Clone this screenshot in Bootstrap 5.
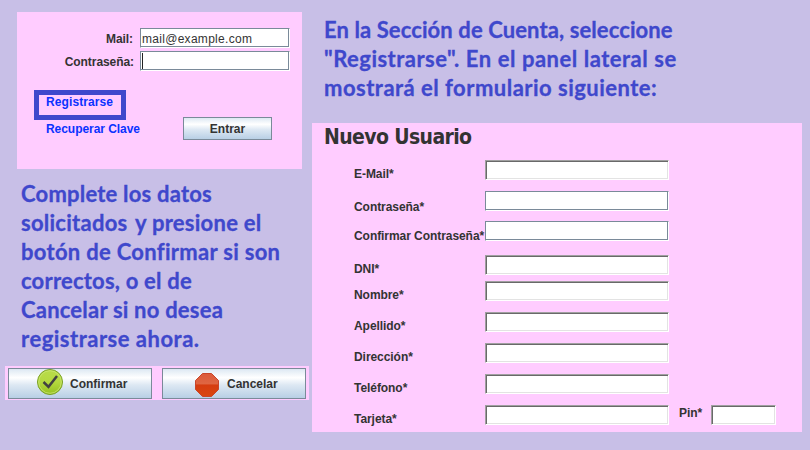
<!DOCTYPE html>
<html lang="es">
<head>
<meta charset="utf-8">
<meta name="viewport" content="width=device-width, initial-scale=1">
<title>Nuevo Usuario</title>
<link href="https://cdn.jsdelivr.net/npm/bootstrap@5.3.0/dist/css/bootstrap.min.css" rel="stylesheet">
<style>
body{width:810px;height:450px;overflow:hidden;background:#c8bfe7;font:bold 12px/14px "Liberation Sans",Arial,sans-serif;color:#333}
.left-side{width:312px;flex:none}
.pink{background:#ffccff}
.login{width:285px;height:157px;margin:12px 0 0 17px;padding-top:16px}
.login-row{height:20px;margin-bottom:3px}
.login-row label{width:116px;margin-right:1px;padding-top:4px;text-align:right;letter-spacing:-.07px}
.login-row label.pw{width:117px;margin-right:0}
.field{display:block;width:184px;height:20px;padding:0 2px;border:0;border-radius:0;outline:0;background:#fff;color:#333;flex:none}
.sunken{border:1px solid #fff;border-top-color:#a0a0a0;border-left-color:#a0a0a0;box-shadow:inset 1px 1px #696969,inset -1px -1px #e3e3e3}
.metal{border:1px solid #fff;border-top-color:#7a8a99;border-left-color:#7a8a99;box-shadow:inset -1px -1px #7a8a99}
.login .field{width:150px;margin-left:6px;padding:1px 1px 0;font:12px/17px "Liberation Sans",Arial,sans-serif;letter-spacing:.29px}
.caret{width:1px;height:16px;margin:0;background:#222}
.links{width:106px;margin:16px 0 0 17px}
.links a{display:block;color:#0a32ff;text-decoration:none;white-space:nowrap}
.links .marked{width:92px;height:30px;border:5px solid #3f48cc;padding:0 0 0 7px;letter-spacing:.1px}
.links .recover{padding:2px 0 0 12px;letter-spacing:-.05px}
.btn.steel{height:23px;padding:0;border:1px solid #7a8a99;border-radius:0;color:#333;font:bold 12px/21px "Liberation Sans",Arial,sans-serif;background:linear-gradient(#dde8f3 0,#fff 30%,#dde8f3 55%,#b8cfe5 100%)}
.btn.enter{width:89px;margin:43px 0 0 43px;padding-top:1px}
.note{color:#3f48cc;font:bold 22px/29px Lato,sans-serif;white-space:nowrap;font-variant-ligatures:none;-webkit-text-stroke:.3px #3f48cc}
.note div{height:29px}
.l1,.l4,.l5{letter-spacing:.21px}
.l2{letter-spacing:.25px}
.l2 span{margin-left:2px}
.l3{letter-spacing:.3px}
.l6{letter-spacing:.5px}
.r1{letter-spacing:.1px}
.r2{letter-spacing:.48px;word-spacing:.3px}
.r3{letter-spacing:.48px}
.note-left{margin:10px 0 0 21px;height:174px}
.note-right{margin:15px 0 0 12px;height:87px}
.actions{width:304px;height:34px;margin:13px 0 0 5px;padding:2px 3px 1px;gap:10px}
.btn.wide{width:144px;height:31px;padding-top:1px}
.wide svg{display:block;margin-top:-1px}
.form-box{width:490px;height:309px;margin-top:21px;padding-left:12px}
.form-box h1{margin:0;height:37px;font:bold 21px/28px "DejaVu Sans Condensed","DejaVu Sans",sans-serif;font-stretch:condensed;letter-spacing:-.62px}
.form-row{height:20px;margin-bottom:11px;letter-spacing:-.06px}
.form-row label{width:131px;margin-left:30px;padding-top:7px;white-space:nowrap}
.form-row label.pin{width:32px;margin-left:10px;padding-top:1px}
.form-row .pin-field{width:65px}
.lower label{padding-top:9px}
.lower.confirm label{padding-top:8px}
</style>
<script src="https://cdn.jsdelivr.net/npm/bootstrap@5.3.0/dist/js/bootstrap.bundle.min.js"></script>
</head>
<body class="d-flex align-items-start">
<div class="left-side">
  <section class="login pink">
    <div class="login-row d-flex"><label for="mail">Mail:</label><input id="mail" class="field metal" value="mail@example.com"></div>
    <div class="login-row d-flex"><label class="pw">Contraseña:</label><div class="field metal"><div class="caret"></div></div></div>
    <div class="d-flex align-items-start">
      <nav class="links"><a class="marked" href="#">Registrarse</a><a class="recover" href="#">Recuperar Clave</a></nav>
      <button class="btn steel enter">Entrar</button>
    </div>
  </section>
  <div class="note note-left">
    <div class="l1">Complete los datos</div>
    <div class="l2">solicitados <span>y presione el</span></div>
    <div class="l3">botón de Confirmar si son</div>
    <div class="l4">correctos, o el de</div>
    <div class="l5">Cancelar si no desea</div>
    <div class="l6">registrarse ahora.</div>
  </div>
  <div class="actions pink d-flex">
    <button class="btn steel wide d-flex align-items-center"><svg width="61" height="29" viewBox="0 0 61 29">
      <defs><linearGradient id="green" x2="0" y2="1"><stop stop-color="#b9dc4b"/><stop offset=".5" stop-color="#b4d93f"/><stop offset="1" stop-color="#94c01f"/></linearGradient></defs>
      <circle cx="41" cy="13" r="12.5" fill="url(#green)" stroke="#78a022"/><circle cx="41" cy="13" r="11.3" fill="none" stroke="#cbe673" stroke-width=".8"/>
      <path d="M34.500 13l5 4.800L48 7" fill="none" stroke="#414141" stroke-width="2.5"/></svg>Confirmar</button>
    <button class="btn steel wide d-flex align-items-center"><svg width="64" height="29" viewBox="0 0 64 29">
      <defs><linearGradient id="red" x2="0" y2="1"><stop stop-color="#dc5a3b"/><stop offset=".45" stop-color="#df6642"/><stop offset=".5" stop-color="#d63c10"/><stop offset="1" stop-color="#d9460f"/></linearGradient></defs>
      <path d="M39.500 4.500h9l7 7v9l-7 7h-9l-7-7v-9z" fill="url(#red)" stroke="#c9452a"/></svg>Cancelar</button>
  </div>
</div>
<main>
  <div class="note note-right">
    <div class="r1">En la Sección de Cuenta, seleccione</div>
    <div class="r2">"Registrarse". En el panel lateral se</div>
    <div class="r3">mostrará el formulario siguiente:</div>
  </div>
  <section class="form-box pink">
    <h1>Nuevo Usuario</h1>
    <div class="form-row d-flex"><label>E-Mail*</label><input class="field sunken"></div>
    <div class="form-row lower d-flex" style="margin-bottom:10px"><label>Contraseña*</label><input class="field metal"></div>
    <div class="form-row lower confirm d-flex" style="margin-bottom:14px"><label>Confirmar Contraseña*</label><input class="field metal"></div>
    <div class="form-row d-flex" style="margin-bottom:6px"><label>DNI*</label><input class="field sunken"></div>
    <div class="form-row d-flex"><label>Nombre*</label><input class="field sunken"></div>
    <div class="form-row d-flex"><label>Apellido*</label><input class="field sunken"></div>
    <div class="form-row d-flex"><label>Dirección*</label><input class="field sunken"></div>
    <div class="form-row d-flex"><label>Teléfono*</label><input class="field sunken"></div>
    <div class="form-row d-flex"><label>Tarjeta*</label><input class="field sunken"><label class="pin">Pin*</label><input class="field sunken pin-field"></div>
  </section>
</main>
</body>
</html>
